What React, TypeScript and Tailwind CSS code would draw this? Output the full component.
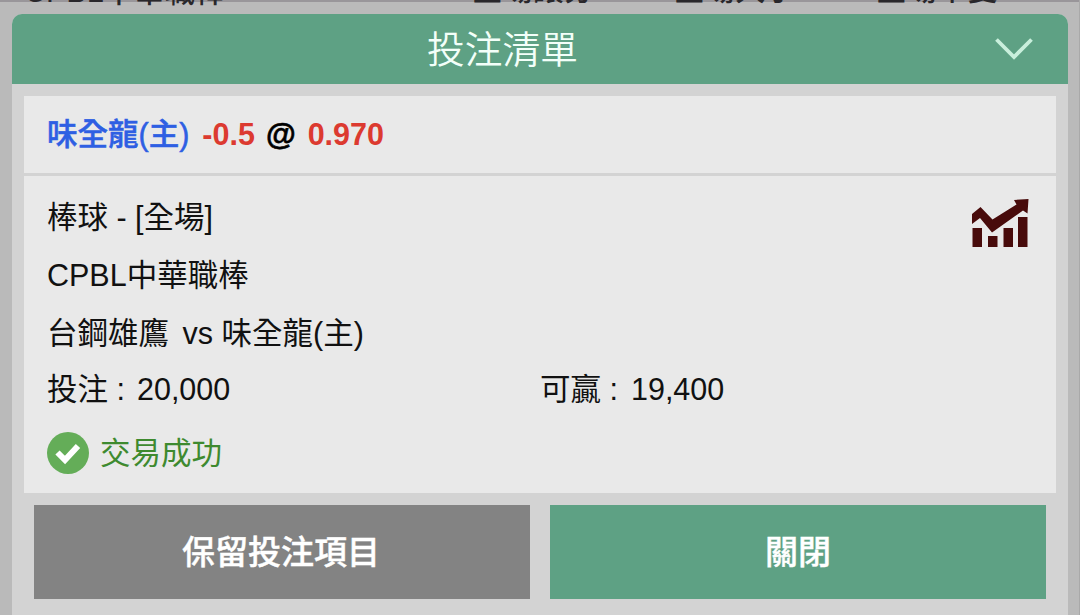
const MARKETS = ["全場讓分", "全場大小", "全場單雙"];

const TrendIcon = () => {
  return (
    <svg
      viewBox="0 0 58 50"
      className="w-[58px] h-[50px] shrink-0 fill-[#480b0b]"
    >
      <path d="M1 15 L9.5 8 L21.5 20.5 L45.5 5.5 L43 1 L57.5 0 L56.5 14.5 L52 11.5 L21 33.5 L9 19 L1 25 Z" />
      <path d="M1.5 29h9.5v19H1.5zM17 37h9.5v11H17zM32.5 29H42v19h-9.500zM47 18h9.5v30H47z" />
    </svg>
  );
};

const CheckIcon = () => {
  return (
    <svg viewBox="0 0 42 42" className="w-[42px] h-[42px] shrink-0" fill="none">
      <circle cx="21" cy="21" r="21" fill="#64ad58" />
      <path d="M10.5 20.5 L18 28 L31 14" stroke="#fff" strokeWidth="6" />
    </svg>
  );
};

const OddsTableHeader = () => {
  return (
    <div className="absolute inset-x-0 top-0 h-[2px] bg-[#99969a] text-[#29272b]">
      <div className="flex -mt-[26px] text-[30.5px] leading-[31px] font-medium whitespace-nowrap">
        <p className="w-[448px] pl-6 pt-[2px]">CPBL中華職棒</p>
        {MARKETS.map((market) => (
          <p key={market} className="w-[202px] pl-6">
            {market}
          </p>
        ))}
      </div>
    </div>
  );
};

const BetSlip = () => {
  return (
    <div className="flex flex-col w-[1056px] h-[601px] bg-[#d3d3d3] rounded-t-[10px] overflow-hidden">
      <div className="flex flex-row items-center h-[69.5px] shrink-0 bg-[#5ea184] pr-[35px]">
        <p className="flex-1 pt-[2px] pr-[2px] text-center text-[37.7px] leading-[70px] font-[350] text-[#f3fff9]">
          投注清單
        </p>
        <svg viewBox="0 0 38 22" className="w-[38px] h-[22px]" fill="none">
          <path d="M1.5 1.5 L19 19 L36.5 1.5" stroke="#c9efdc" strokeWidth="3.8" />
        </svg>
      </div>

      <div className="flex flex-col mt-[12.5px] mx-3 h-[397px] bg-[#e9e9e9]">
        <div className="flex flex-row items-center h-[80px] shrink-0 pl-[23px] border-b-3 border-[#d3d3d3] text-[30.5px] font-bold">
          <p className="font-medium text-[#2e5fe3] [-webkit-text-stroke:0.5px_#2e5fe3]">
            味全龍(主)
          </p>
          <p className="ml-[13px] text-[#dc3a30]">-0.5</p>
          <p className="ml-[11px] text-black [-webkit-text-stroke:0.6px_black]">
            @
          </p>
          <p className="ml-3 text-[#dc3a30]">0.970</p>
        </div>

        <div className="flex flex-col pl-[23px] pr-[27px] text-[30.5px] text-[#111] leading-[58px]">
          <div className="flex flex-row justify-between mt-[12px] h-[58px]">
            <p>棒球 - [全場]</p>
            <div className="pt-[11px]">
              <TrendIcon />
            </div>
          </div>
          <p>CPBL中華職棒</p>
          <div className="flex flex-row gap-[13.5px]">
            <p>台鋼雄鷹</p>
            <p>vs 味全龍(主)</p>
          </div>
          <div className="flex flex-row -mt-[2px] h-[58px]">
            <div className="flex flex-row gap-3 w-[493px]">
              <p>投注 :</p>
              <p>20,000</p>
            </div>
            <div className="flex flex-row gap-[13px]">
              <p>可贏 :</p>
              <p>19,400</p>
            </div>
          </div>
          <div className="flex flex-row items-center gap-[11px] mt-[6px] h-[58px]">
            <CheckIcon />
            <p className="text-[#3e8a2f]">交易成功</p>
          </div>
        </div>
      </div>

      <div className="grid grid-cols-2 gap-5 mt-3 mx-[22px] text-[33px] font-medium text-white [-webkit-text-stroke:0.4px_white]">
        <button className="h-[94px] pt-[2px] pr-[2px] bg-[#838383]">
          保留投注項目
        </button>
        <button className="h-[94px] pt-[2px] bg-[#5ea184]">關閉</button>
      </div>
    </div>
  );
};

const App = () => {
  return (
    <div className="relative flex items-end w-full h-[615px] pl-3 overflow-hidden border-r border-[#a9a9a9] bg-[#bababa] font-['Liberation_Sans','Noto_Sans_CJK_TC',sans-serif]">
      <OddsTableHeader />
      <BetSlip />
    </div>
  );
};

export default App;
